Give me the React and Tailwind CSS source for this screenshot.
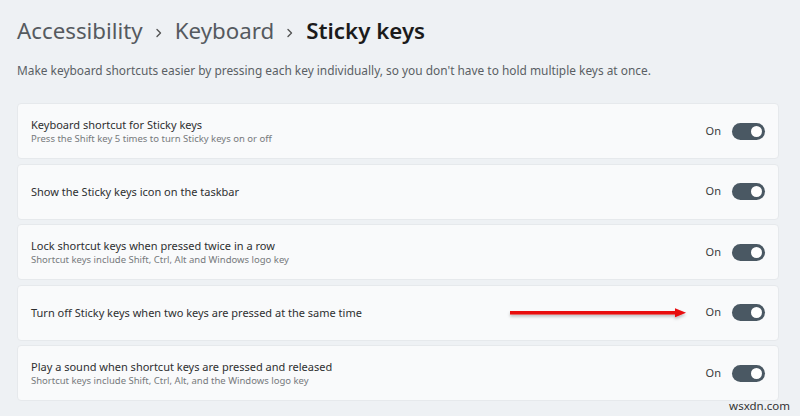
import React from "react";

const rows = [
  { title: "Keyboard shortcut for Sticky keys", sub: "Press the Shift key 5 times to turn Sticky keys on or off" },
  { title: "Show the Sticky keys icon on the taskbar" },
  { title: "Lock shortcut keys when pressed twice in a row", sub: "Shortcut keys include Shift, Ctrl, Alt and Windows logo key" },
  { title: "Turn off Sticky keys when two keys are pressed at the same time", arrow: true },
  { title: "Play a sound when shortcut keys are pressed and released", sub: "Shortcut keys include Shift, Ctrl, Alt, and the Windows logo key" },
];

function Chevron() {
  return (
    <svg width="8" height="12" viewBox="0 0 8 12" className="mx-[12px] mt-[2px]">
      <path d="M2 2.5 L5.5 6 L2 9.5" fill="none" stroke="#555" strokeWidth="1.4" strokeLinecap="round" strokeLinejoin="round" />
    </svg>
  );
}

function Toggle() {
  return (
    <div className="flex h-[17px] w-[33px] items-center justify-end rounded-full bg-[#4a5863] pr-[3px]">
      <div className="h-[11px] w-[11px] rounded-full bg-white" />
    </div>
  );
}

function Arrow() {
  return (
    <svg width="200" height="20" viewBox="0 0 200 20" className="absolute left-[473px] top-1/2 -translate-y-1/2">
      <defs>
        <filter id="sh" x="-10%" y="-100%" width="120%" height="300%">
          <feDropShadow dx="0" dy="2" stdDeviation="1.5" floodColor="#000" floodOpacity="0.25" />
        </filter>
      </defs>
      <g filter="url(#sh)">
        <rect x="19" y="8" width="168" height="3.5" fill="#e8080a" />
        <path d="M184 5.3 L195 9.8 L184 14.3 Z" fill="#e8080a" />
      </g>
    </svg>
  );
}

export default function App() {
  return (
    <div
      className="relative h-[416px] w-[800px] overflow-hidden bg-[#eef1f4] pl-[17px] pr-[21px]"
      style={{ fontFamily: '"Noto Sans", "Open Sans", sans-serif' }}
    >
      <div className="flex h-[62px] items-center pt-[1px] text-[22.3px] leading-none">
        <span className="text-[#555a5f]">Accessibility</span>
        <Chevron />
        <span className="text-[#555a5f]">Keyboard</span>
        <Chevron />
        <span className="font-semibold text-[#1b1b1b]">Sticky keys</span>
      </div>
      <div className="h-[41px] text-[11.9px] leading-[16px] text-[#5a5f64]">
        Make keyboard shortcuts easier by pressing each key individually, so you don't have to hold multiple keys at once.
      </div>
      <div className="flex flex-col gap-[4.5px]">
        {rows.map((r, i) => (
          <div
            key={i}
            className="relative flex h-[56px] items-center justify-between rounded-[4px] border border-[#e6e9ec] bg-[#f9fafb] pl-[13px] pr-[13px]"
          >
            <div className="flex flex-col">
              <div className="text-[11px] leading-[15px] text-[#2e2f30]">{r.title}</div>
              {r.sub && <div className="text-[9.5px] leading-[13px] text-[#76797c]">{r.sub}</div>}
            </div>
            {r.arrow && <Arrow />}
            <div className="flex items-center gap-[11px]">
              <span className="text-[11px] text-[#3a3b3c]">On</span>
              <Toggle />
            </div>
          </div>
        ))}
      </div>
      <div className="absolute bottom-[2px] right-[10px] text-[11.5px] text-[#333]">wsxdn.com</div>
    </div>
  );
}
